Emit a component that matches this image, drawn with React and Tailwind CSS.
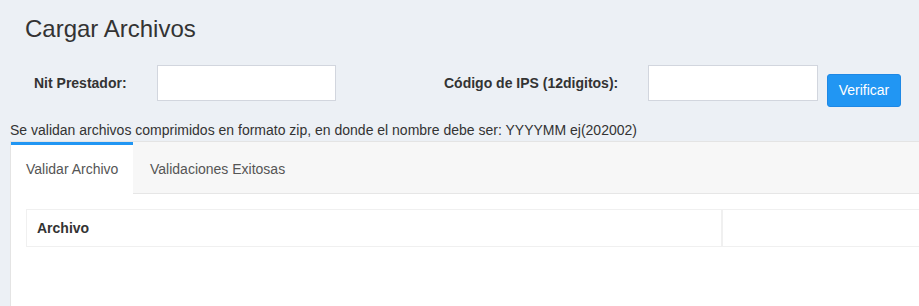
export default function App() {
  return (
    <div className="min-h-screen w-[919px] overflow-hidden bg-[#ecf0f5] font-['Liberation_Sans',Arial,sans-serif] text-[#333]">
      <h1 className="pl-[25px] pt-[15px] text-[24px] leading-[28px] font-normal text-[#333]">Cargar Archivos</h1>

      <div className="mt-[22px] flex items-start pl-[34px]">
        <label className="w-[123px] h-[36px] flex items-center text-[14px] font-bold text-[#333]">Nit Prestador:</label>
        <input className="w-[179px] h-[36px] bg-white border border-[#d2d6de] outline-none" />
        <label className="ml-[108px] w-[204px] h-[36px] flex items-center text-[14px] font-bold text-[#333]">Código de IPS (12digitos):</label>
        <input className="w-[170px] h-[36px] bg-white border border-[#d2d6de] outline-none" />
        <button className="ml-[9px] mt-[9px] w-[74px] h-[33px] rounded-[3px] bg-[#2196f3] border border-[#1e88e5] text-white text-[14px]">Verificar</button>
      </div>

      <p className="mt-[15px] pl-[10px] text-[14px] leading-[16px] text-[#333]">
        Se validan archivos comprimidos en formato zip, en donde el nombre debe ser: YYYYMM ej(202002)
      </p>

      <div className="ml-[10px] mt-[3px] border-t border-l border-[#e4e4e4] bg-white w-[920px] h-[170px]">
        <div className="flex bg-[#f7f7f7] border-b border-[#e6e6e6] h-[52px]">
          <div className="w-[122px] h-[52px] bg-white border-t-[3px] border-[#2196f3] flex items-center pl-[15px] text-[14px] text-[#555]">
            Validar Archivo
          </div>
          <div className="flex items-center pl-[17px] pt-[3px] text-[14px] text-[#555]">Validaciones Exitosas</div>
        </div>
        <div className="pl-[15px] pt-[15px]">
          <div className="flex w-[920px] h-[38px] border border-[#f0f0f0]">
            <div className="w-[696px] border-r-[2px] border-[#f0f0f0] flex items-center pl-[10px] text-[14px] font-bold text-[#333]">Archivo</div>
            <div className="flex-1" />
          </div>
        </div>
      </div>
    </div>
  );
}
